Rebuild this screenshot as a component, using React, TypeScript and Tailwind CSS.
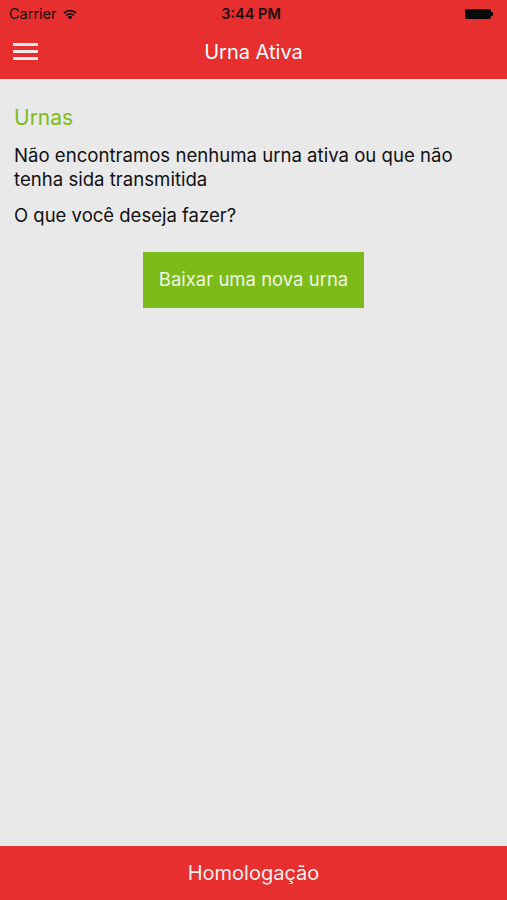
import React from "react";

// Status bar + nav bar, content, bottom tab

function WifiIcon() {
  return (
    <svg width="16" height="12" viewBox="0 0 16 12" className="ml-[5px]">
      <path d="M8 11.5 L5.6 8.9 A3.4 3.4 0 0 1 10.4 8.9 Z" fill="#1a0a0a" />
      <path d="M3.6 6.8 A6.3 6.3 0 0 1 12.4 6.8 L11.2 8.1 A4.6 4.6 0 0 0 4.8 8.1 Z" fill="#1a0a0a" />
      <path d="M1.4 4.5 A9.4 9.4 0 0 1 14.6 4.5 L13.4 5.8 A7.7 7.7 0 0 0 2.6 5.8 Z" fill="#1a0a0a" />
    </svg>
  );
}

function Battery() {
  return (
    <div className="flex items-center">
      <div className="w-[26px] h-[10px] rounded-[2px] bg-[#0a0a0a]" />
      <div className="w-[2px] h-[4px] rounded-r-[1px] bg-[#0a0a0a]" />
    </div>
  );
}

export default function App() {
  const font = { fontFamily: 'Inter, "Liberation Sans", Arial, sans-serif' };

  return (
    <div className="w-[507px] h-[900px] flex flex-col bg-[#e9e9e9]" style={font}>
      {/* header */}
      <div className="bg-[#e72f2f] h-[79px] flex flex-col">
        <div className="h-[27px] flex items-center px-[9px]">
          <div className="flex items-center flex-1">
            <span className="text-[14.5px] text-[#1a0a0a]">Carrier</span>
            <WifiIcon />
          </div>
          <span className="text-[14.5px] font-semibold text-[#1a0a0a]">3:44 PM</span>
          <div className="flex-1 flex justify-end pr-[5px]">
            <Battery />
          </div>
        </div>
        <div className="flex-1 flex items-center relative">
          <div className="absolute left-[13px] top-[16px] flex flex-col gap-[4px]">
            <div className="w-[25px] h-[3px] bg-[#fbe9e9]" />
            <div className="w-[25px] h-[3px] bg-[#fbe9e9]" />
            <div className="w-[25px] h-[3px] bg-[#fbe9e9]" />
          </div>
          <div className="flex-1 text-center text-white text-[20px] pb-[2px]">Urna Ativa</div>
        </div>
      </div>

      {/* content */}
      <div className="flex-1 px-[14px] pt-[26px]">
        <h1 className="text-[#7dbb1d] text-[21px] leading-[26px]">Urnas</h1>
        <p className="text-[#111] text-[18.6px] leading-[24px] mt-[12px] pr-[20px]">
          Não encontramos nenhuma urna ativa ou que não tenha sida transmitida
        </p>
        <p className="text-[#111] text-[18.5px] leading-[24px] mt-[12px]">O que você deseja fazer?</p>
        <div className="flex justify-center mt-[25px]">
          <button
            type="button"
            className="w-[221px] h-[56px] bg-[#7cbb1a] text-[#eef7e0] text-[18.5px]"
          >
            Baixar uma nova urna
          </button>
        </div>
      </div>

      {/* bottom bar */}
      <div className="h-[54px] bg-[#e72f2f] flex items-center justify-center text-[#fdeeee] text-[20px]">
        Homologação
      </div>
    </div>
  );
}
